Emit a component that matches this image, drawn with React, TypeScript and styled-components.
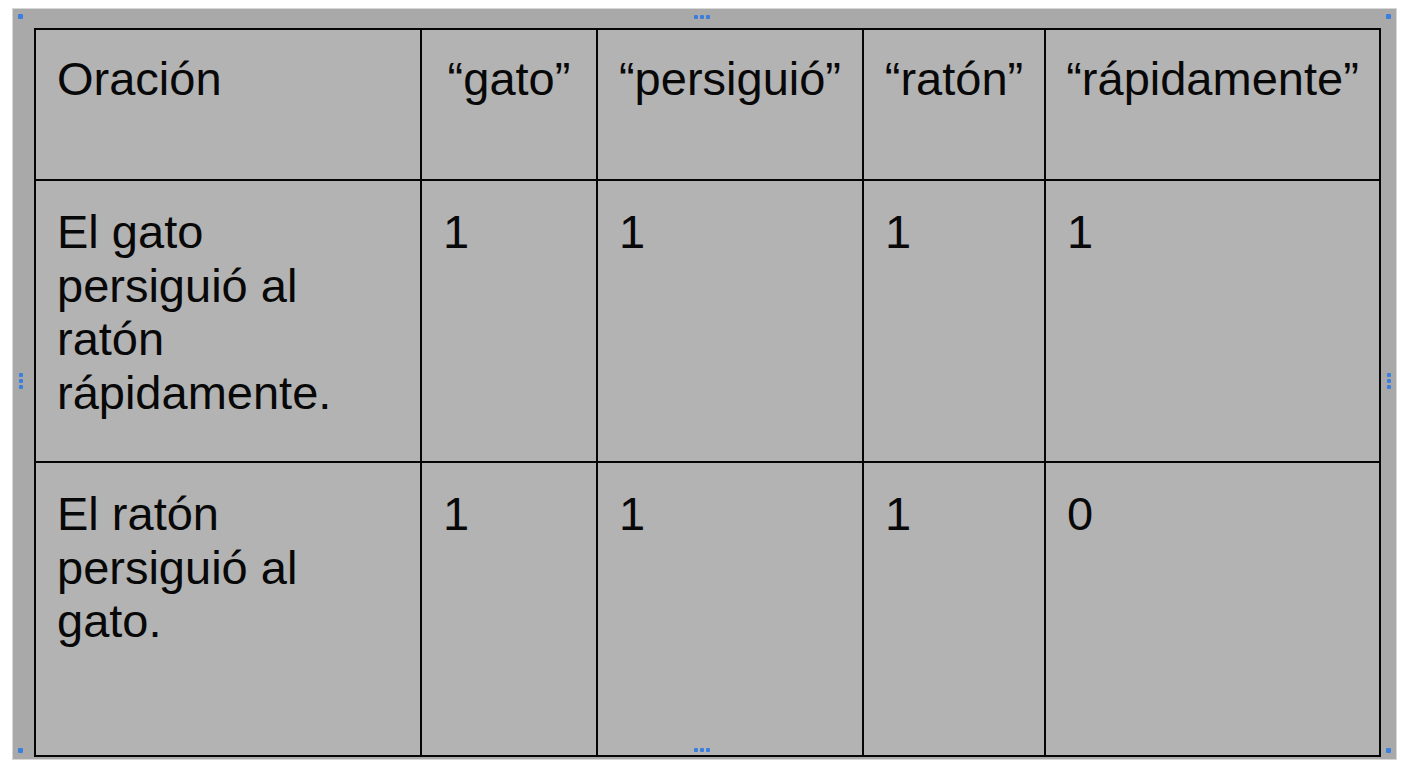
import styled, { createGlobalStyle } from "styled-components";

type Row = {
  sentence: string[];
  counts: number[];
};

const words = ["“gato”", "“persiguió”", "“ratón”", "“rápidamente”"];

const rows: Row[] = [
  {
    sentence: ["El gato", "persiguió al", "ratón", "rápidamente."],
    counts: [1, 1, 1, 1],
  },
  {
    sentence: ["El ratón", "persiguió al", "gato."],
    counts: [1, 1, 1, 0],
  },
];

const columnWidths = [386, 176, 266, 182, 335];
const rowHeights = [151, 282, 294];

const GlobalStyle = createGlobalStyle`
  html, body {
    margin: 0;
    padding: 0;
    background: #ffffff;
  }
  body {
    font-family: "Liberation Sans", Arial, sans-serif;
  }
`;

const Page = styled.div`
  width: 1408px;
  height: 768px;
  padding: 8px 0 0 12px;
  box-sizing: border-box;
`;

const Frame = styled.div`
  position: relative;
  width: 1385px;
  height: 752px;
  box-sizing: border-box;
  padding: 19px 0 0 21px;
  background: #a9a9a9;
  border: 1px solid #d6d6d6;
`;

const Table = styled.table`
  border-collapse: collapse;
  table-layout: fixed;
  width: 1345px;
  background: #b3b3b3;
  border: 2px solid #050505;
`;

const HeadCell = styled.th<{ $align?: "left" | "center" }>`
  border: 2px solid #050505;
  padding: ${(p) => (p.$align === "left" ? "22px 6px 0 21px" : "22px 0 0 0")};
  vertical-align: top;
  text-align: ${(p) => p.$align ?? "center"};
  font-weight: 400;
  font-size: 47px;
  line-height: 54px;
  color: #080808;
  white-space: nowrap;
`;

const Cell = styled.td`
  border: 2px solid #050505;
  padding: 24px 12px 0 21px;
  vertical-align: top;
  text-align: left;
  font-size: 47px;
  line-height: 53.7px;
  color: #080808;
`;

const Line = styled.div`
  white-space: nowrap;
`;

const Handle = styled.span<{ $x: string; $y: string }>`
  position: absolute;
  left: ${(p) => p.$x};
  top: ${(p) => p.$y};
  width: 5px;
  height: 5px;
  background: #3a7fe0;
  border-radius: 1px;
`;

const DotGroup = styled.span<{ $x: string; $y: string; $vertical?: boolean }>`
  position: absolute;
  left: ${(p) => p.$x};
  top: ${(p) => p.$y};
  display: flex;
  flex-direction: ${(p) => (p.$vertical ? "column" : "row")};
  gap: 2px;

  i {
    display: block;
    width: 4px;
    height: 4px;
    background: #3a7fe0;
    border-radius: 1px;
  }
`;

const Dots = (props: { x: string; y: string; vertical?: boolean }) => (
  <DotGroup $x={props.x} $y={props.y} $vertical={props.vertical}>
    <i />
    <i />
    <i />
  </DotGroup>
);

export default function App() {
  return (
    <>
      <GlobalStyle />
      <Page>
        <Frame>
          <Table>
            <colgroup>
              {columnWidths.map((w, i) => (
                <col key={i} style={{ width: w }} />
              ))}
            </colgroup>
            <thead>
              <tr style={{ height: rowHeights[0] }}>
                <HeadCell $align="left">Oración</HeadCell>
                {words.map((w) => (
                  <HeadCell key={w}>{w}</HeadCell>
                ))}
              </tr>
            </thead>
            <tbody>
              {rows.map((row, r) => (
                <tr key={r} style={{ height: rowHeights[r + 1] }}>
                  <Cell>
                    {row.sentence.map((line) => (
                      <Line key={line}>{line}</Line>
                    ))}
                  </Cell>
                  {row.counts.map((c, i) => (
                    <Cell key={i}>{c}</Cell>
                  ))}
                </tr>
              ))}
            </tbody>
          </Table>

          {/* selection handles lying over the frame */}
          <Handle $x="5px" $y="5px" />
          <Handle $x="1373px" $y="5px" />
          <Handle $x="5px" $y="739px" />
          <Handle $x="1373px" $y="739px" />
          <Dots x="681px" y="6px" />
          <Dots x="681px" y="739px" />
          <Dots x="6px" y="364px" vertical />
          <Dots x="1374px" y="364px" vertical />
        </Frame>
      </Page>
    </>
  );
}
